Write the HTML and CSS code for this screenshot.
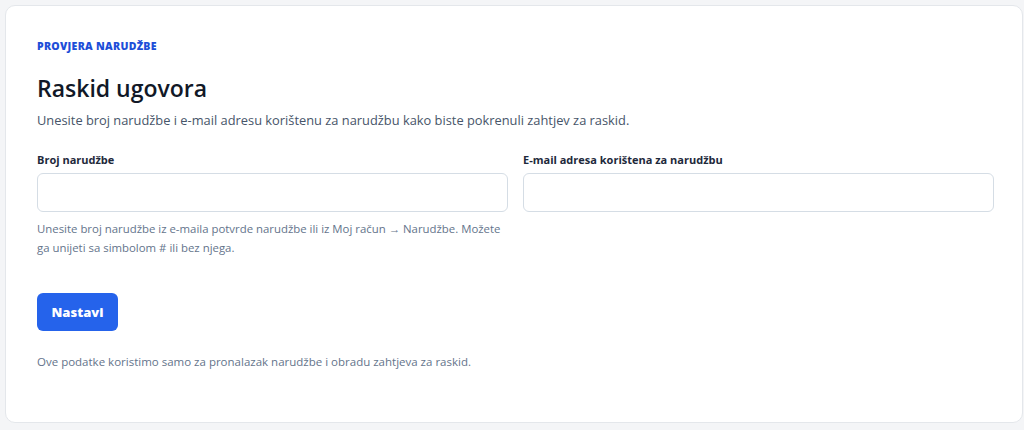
FILE: index.html
```html
<!DOCTYPE html>
<html lang="hr">
  <head>
    <meta charset="utf-8">
    <meta name="viewport" content="width=device-width">
    <title>Raskid ugovora</title>
    <link rel="stylesheet" href="styles.css">
  </head>
  <body>
    <div class="c_kartica">
      <div class="c_oznaka">Provjera narudžbe</div>
      <h1>Raskid ugovora</h1>
      <p class="c_opis">Unesite broj narudžbe i e-mail adresu korištenu za narudžbu kako biste pokrenuli zahtjev za raskid.</p>
      <form class="c_forma">
        <div class="c_polja">
          <div class="c_polje">
            <label for="broj">Broj narudžbe</label>
            <input id="broj" type="text">
            <div class="c_pomoc">Unesite broj narudžbe iz e-maila potvrde narudžbe ili iz Moj račun → Narudžbe. Možete ga unijeti sa simbolom # ili bez njega.</div>
          </div>
          <div class="c_polje">
            <label for="email">E-mail adresa korištena za narudžbu</label>
            <input id="email" type="email">
          </div>
        </div>
        <button type="button">Nastavi</button>
      </form>
      <p class="c_napomena">Ove podatke koristimo samo za pronalazak narudžbe i obradu zahtjeva za raskid.</p>
    </div>
  </body>
</html>
```
FILE: styles.css
```css
* {
  margin: 0;
  padding: 0;
  box-sizing: border-box;
}
body {
  background-color: #f4f5f7;
  font-family: "Open Sans", "Noto Sans", sans-serif;
  color: #0f172a;
  padding: 5px 1px 0 5px;
}
.c_kartica {
  background-color: #fff;
  border: 1px solid #e4e7eb;
  border-radius: 10px;
  height: 418px;
  padding: 33px 28px 0 31px;
}
.c_oznaka {
  color: #1d4ed8;
  font-size: 10.5px;
  font-weight: 800;
  text-transform: uppercase;
  letter-spacing: 0.3px;
  line-height: 14px;
}
h1 {
  font-size: 23px;
  font-weight: 600;
  line-height: 30px;
  margin: 20px 0 0 0;
  color: #111827;
}
.c_opis {
  font-size: 12.85px;
  color: #475569;
  line-height: 20px;
  margin: 7px 0 0 0;
}
.c_polja {
  display: grid;
  grid-template-columns: 1fr 1fr;
  gap: 15px;
  margin: 22px 0 0 0;
}
.c_polje label {
  display: block;
  font-size: 11px;
  font-weight: 700;
  color: #1e293b;
  line-height: 16px;
  margin: 0 0 5px 0;
}
.c_polje input {
  display: block;
  width: 100%;
  height: 39px;
  border: 1px solid #d5dde5;
  border-radius: 6px;
  background: #fff;
}
.c_pomoc {
  font-size: 11.4px;
  color: #64748b;
  line-height: 19px;
  margin: 7px 0 0 0;
}
button {
  display: block;
  background-color: #2563eb;
  color: #fff;
  font-family: "Open Sans", sans-serif;
  font-size: 13px;
  font-weight: 800;
  border: none;
  border-radius: 6px;
  width: 81px;
  height: 38px;
  margin: 36px 0 0 0;
}
.c_napomena {
  font-size: 11.5px;
  color: #64748b;
  line-height: 18px;
  margin: 22px 0 0 0;
}
```
